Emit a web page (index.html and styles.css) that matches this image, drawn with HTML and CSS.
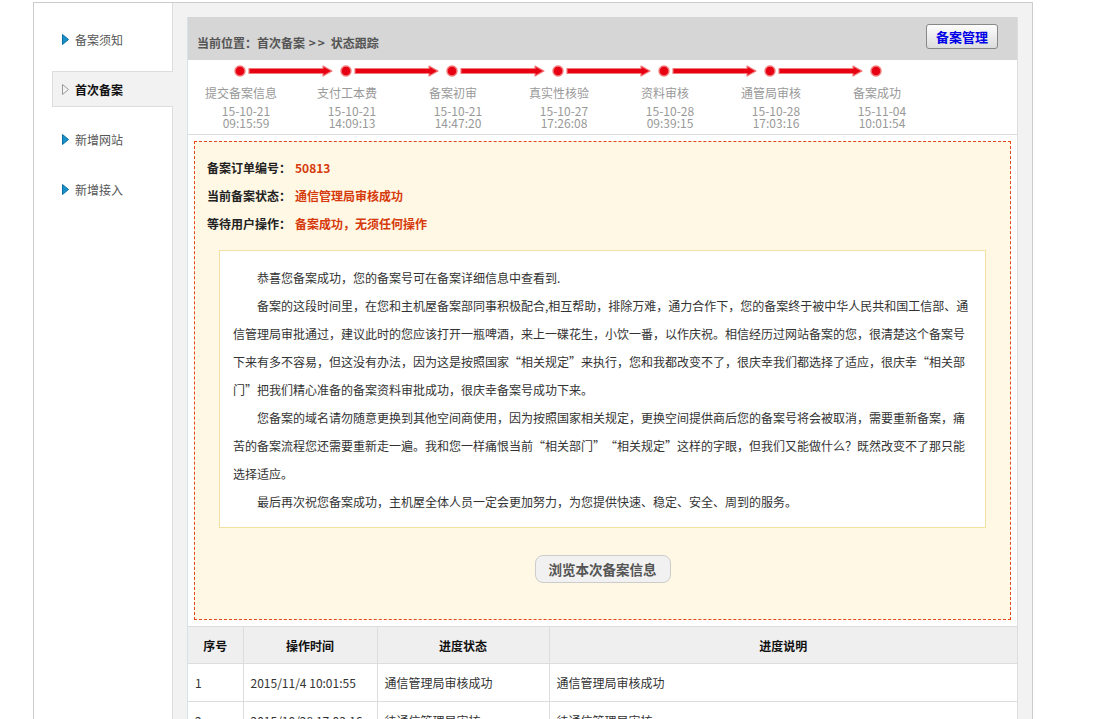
FILE: index.html
```html
<!DOCTYPE html>
<html lang="zh-CN">
<head>
<meta charset="utf-8">
<title>状态跟踪</title>
<link rel="stylesheet" href="styles.css">
</head>
<body>
<div class="page">
  <aside class="side">
    <a class="nav-item"><svg class="tri" width="7" height="11" viewBox="0 0 7 11"><polygon points="0.5,0.5 6.5,5.5 0.5,10.5" fill="#1a90c8" stroke="#0b6fa3" stroke-width="1"/></svg><span>备案须知</span></a>
    <a class="nav-item active"><svg class="tri" width="7" height="11" viewBox="0 0 7 11"><polygon points="0.5,0.5 6.5,5.5 0.5,10.5" fill="#f2f2f2" stroke="#999" stroke-width="1"/></svg><span>首次备案</span></a>
    <a class="nav-item"><svg class="tri" width="7" height="11" viewBox="0 0 7 11"><polygon points="0.5,0.5 6.5,5.5 0.5,10.5" fill="#1a90c8" stroke="#0b6fa3" stroke-width="1"/></svg><span>新增网站</span></a>
    <a class="nav-item"><svg class="tri" width="7" height="11" viewBox="0 0 7 11"><polygon points="0.5,0.5 6.5,5.5 0.5,10.5" fill="#1a90c8" stroke="#0b6fa3" stroke-width="1"/></svg><span>新增接入</span></a>
  </aside>
  <main class="main">
    <section class="panel">
      <header class="panel-head">
        <div class="crumb">当前位置：首次备案 <span class="sep">&gt;&gt;</span> 状态跟踪</div>
        <button class="btn-manage">备案管理</button>
      </header>
      <div class="steps">
        <svg class="step-line" width="742" height="22" viewBox="0 0 742 22">
          <defs>
            <g id="seg">
              <circle cx="0" cy="11" r="5" fill="#e60012" stroke="#f27a7a" stroke-width="1.4"/>
              <polygon points="9,8.5 83,8.5 83,6 92,11 83,16 83,13.5 9,13.5" fill="#e60012" stroke="#f27a7a" stroke-width="1.2" stroke-linejoin="round"/>
            </g>
          </defs>
          <use href="#seg" x="52"/>
          <use href="#seg" x="158"/>
          <use href="#seg" x="264"/>
          <use href="#seg" x="370"/>
          <use href="#seg" x="476"/>
          <use href="#seg" x="582"/>
          <circle cx="688" cy="11" r="5" fill="#e60012" stroke="#f27a7a" stroke-width="1.4"/>
        </svg>
        <div class="step-labels">
          <div class="step"><div class="step-name">提交备案信息</div><div class="step-time"><div>15-10-21</div><div>09:15:59</div></div></div>
          <div class="step"><div class="step-name">支付工本费</div><div class="step-time"><div>15-10-21</div><div>14:09:13</div></div></div>
          <div class="step"><div class="step-name">备案初审</div><div class="step-time"><div>15-10-21</div><div>14:47:20</div></div></div>
          <div class="step"><div class="step-name">真实性核验</div><div class="step-time"><div>15-10-27</div><div>17:26:08</div></div></div>
          <div class="step"><div class="step-name">资料审核</div><div class="step-time"><div>15-10-28</div><div>09:39:15</div></div></div>
          <div class="step"><div class="step-name">通管局审核</div><div class="step-time"><div>15-10-28</div><div>17:03:16</div></div></div>
          <div class="step"><div class="step-name">备案成功</div><div class="step-time"><div>15-11-04</div><div>10:01:54</div></div></div>
        </div>
      </div>
      <div class="status-box">
        <div class="info-row"><span class="info-label">备案订单编号：</span><span class="info-value">50813</span></div>
        <div class="info-row"><span class="info-label">当前备案状态：</span><span class="info-value">通信管理局审核成功</span></div>
        <div class="info-row"><span class="info-label">等待用户操作：</span><span class="info-value">备案成功，无须任何操作</span></div>
        <div class="message">
          <p>恭喜您备案成功，您的备案号可在备案详细信息中查看到.</p>
          <p>备案的这段时间里，在您和主机屋备案部同事积极配合,相互帮助，排除万难，通力合作下，您的备案终于被中华人民共和国工信部、通信管理局审批通过，建议此时的您应该打开一瓶啤酒，来上一碟花生，小饮一番，以作庆祝。相信经历过网站备案的您，很清楚这个备案号下来有多不容易，但这没有办法，因为这是按照国家“相关规定”来执行，您和我都改变不了，很庆幸我们都选择了适应，很庆幸“相关部门”把我们精心准备的备案资料审批成功，很庆幸备案号成功下来。</p>
          <p>您备案的域名请勿随意更换到其他空间商使用，因为按照国家相关规定，更换空间提供商后您的备案号将会被取消，需要重新备案，痛苦的备案流程您还需要重新走一遍。我和您一样痛恨当前“相关部门”“相关规定”这样的字眼，但我们又能做什么？既然改变不了那只能选择适应。</p>
          <p>最后再次祝您备案成功，主机屋全体人员一定会更加努力，为您提供快速、稳定、安全、周到的服务。</p>
        </div>
        <div class="btn-row"><button class="btn-view">浏览本次备案信息</button></div>
      </div>
      <table class="log">
        <colgroup><col class="c-no"><col class="c-time"><col class="c-state"><col></colgroup>
        <thead>
          <tr><th>序号</th><th>操作时间</th><th>进度状态</th><th>进度说明</th></tr>
        </thead>
        <tbody>
          <tr><td>1</td><td>2015/11/4 10:01:55</td><td>通信管理局审核成功</td><td>通信管理局审核成功</td></tr>
          <tr><td>2</td><td>2015/10/28 17:03:16</td><td>待通信管理局审核</td><td>待通信管理局审核</td></tr>
        </tbody>
      </table>
    </section>
  </main>
</div>
</body>
</html>
```
FILE: styles.css
```css
html, body {
  margin: 0;
  padding: 0;
  background: #fff;
}
body {
  font-family: "Noto Sans CJK SC", "Microsoft YaHei", sans-serif;
  font-size: 12px;
  color: #333;
  text-spacing-trim: space-all;
}
.page {
  margin: 2px 0 0 33px;
  width: 1000px;
  box-sizing: border-box;
  border: 1px solid #ccc;
  border-bottom: none;
  display: flex;
  min-height: 740px;
}
.side {
  width: 139px;
  box-sizing: border-box;
  border-right: 1px solid #ddd;
  padding-top: 18px;
  position: relative;
  z-index: 1;
}
.nav-item {
  display: flex;
  align-items: center;
  height: 36px;
  box-sizing: border-box;
  margin: 0 -1px 14px 18px;
  padding-left: 9px;
  border: 1px solid transparent;
  border-right: none;
  color: #555;
  cursor: pointer;
}
.nav-item .tri {
  margin-right: 6px;
  flex: none;
}
.nav-item.active {
  background: #f2f2f2;
  border-color: #ddd;
  color: #111;
  font-weight: bold;
}
.main {
  flex: 1;
  background: #f2f2f2;
  padding: 14px 14px 0;
}
.panel {
  background: #fff;
  border-left: 1px solid #d3e4e8;
  border-right: 1px solid #ddd;
  min-height: 720px;
}
.panel-head {
  height: 43px;
  background: #d6d6d6;
  display: flex;
  justify-content: space-between;
  align-items: flex-start;
  padding: 0 19px 0 9px;
}
.crumb {
  margin-top: 17px;
  line-height: 18px;
  font-weight: bold;
  color: #555;
}
.crumb .sep {
  letter-spacing: 2px;
  margin: 0 1px;
}
.btn-manage {
  margin-top: 7px;
  width: 72px;
  height: 25px;
  border: 1px solid #888;
  border-radius: 3px;
  background: linear-gradient(#fdfdfd, #dcdcdc);
  color: #0000e6;
  font-family: inherit;
  font-size: 13px;
  font-weight: bold;
  padding: 0;
}
.steps {
  height: 74px;
  border-bottom: 1px solid #ddd;
}
.step-line {
  display: block;
}
.step-labels {
  display: flex;
  margin-top: 3px;
}
.step {
  width: 106px;
  text-align: center;
  color: #999;
}
.step-name {
  line-height: 16px;
}
.step-time {
  margin-top: 4px;
  padding-left: 10px;
  line-height: 12px;
  font-size: 12px;
  color: #999;
}
.status-box {
  margin: 6px 6px 0;
  background: #fff8e5;
  border: 1px dashed #e2461a;
  padding: 12px 12px 36px;
}
.info-row {
  line-height: 28px;
  font-weight: bold;
}
.info-label {
  color: #222;
}
.info-value {
  margin-left: 4px;
  color: #d63a0c;
}
.message {
  margin: 12px 12px 0;
  background: #fff;
  border: 1px solid #f4e1a1;
  padding: 13px 14px 11px 13px;
}
.message p {
  margin: 0;
  text-indent: 2em;
  line-height: 28px;
  color: #333;
}
.btn-row {
  display: flex;
  justify-content: center;
  margin-top: 27px;
}
.btn-view {
  width: 136px;
  height: 28px;
  border: 1px solid #ccc;
  border-radius: 8px;
  background: #f1f1f1;
  color: #555;
  font-family: inherit;
  font-size: 13.5px;
  font-weight: bold;
  padding: 0;
}
.log {
  margin-top: 6px;
  width: 100%;
  border-collapse: collapse;
  table-layout: fixed;
}
.log .c-no { width: 55px; }
.log .c-time { width: 134px; }
.log .c-state { width: 172px; }
.log th, .log td {
  border: 1px solid #ddd;
  font-size: 12px;
  white-space: nowrap;
}
.log tr > :first-child { border-left: none; }
.log tr > :last-child { border-right: none; }
.log th {
  height: 34px;
  background: #efefef;
  color: #111;
  font-weight: bold;
  text-align: center;
}
.log td {
  height: 37px;
  padding: 0 7px;
  color: #333;
}
```
